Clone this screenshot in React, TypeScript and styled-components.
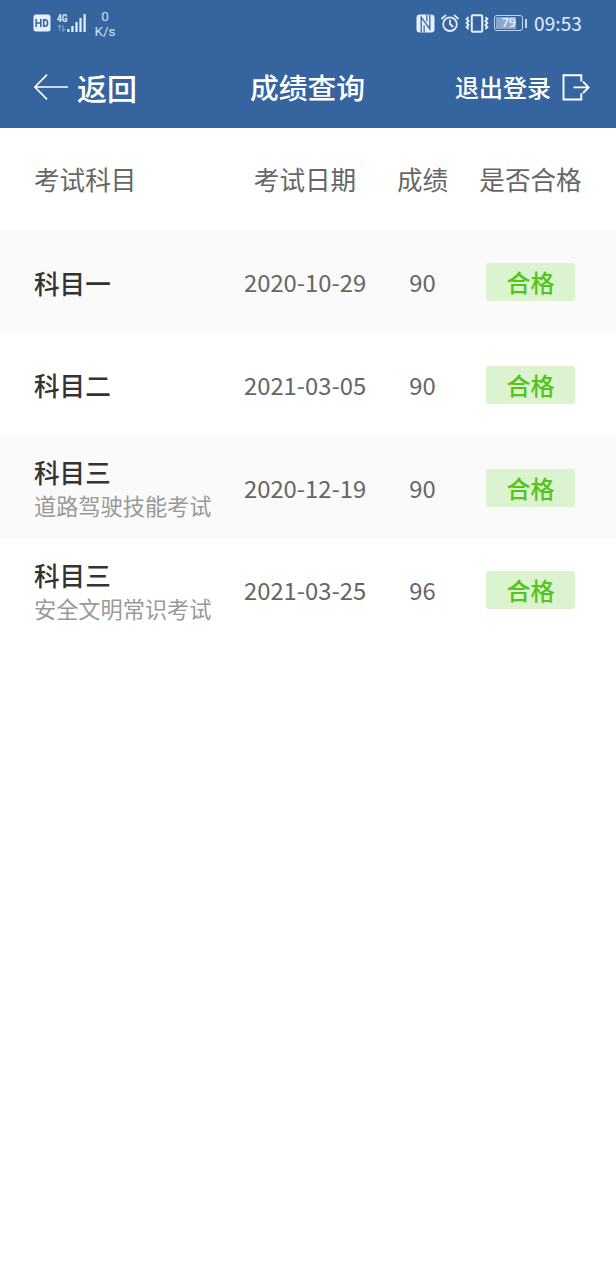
import React from 'react';
import styled, { createGlobalStyle } from 'styled-components';

const cjk = `"Noto Sans CJK SC", sans-serif`;

const GlobalStyle = createGlobalStyle`
  *, *::before, *::after { box-sizing: border-box; }
  body { margin: 0; background: #fff; font-family: "KaiTi", "STKaiti", ${cjk}; }
`;

const Page = styled.main`
  width: 616px;
  min-height: 1280px;
  background: #fff;
`;

const Top = styled.header`
  height: 128px;
  background: #35649f;
  color: #fff;
`;

const StatusBar = styled.div`
  height: 46px;
  padding: 0 34px 0 33px;
  display: flex;
  justify-content: space-between;
  align-items: center;
  color: #e4efff;
`;

const StatusGroup = styled.div<{ $gap: number }>`
  display: flex;
  align-items: center;
  gap: ${({ $gap }) => $gap}px;
  svg { display: block; }
`;

const Speed = styled.div`
  width: 24px;
  padding-top: 2px;
  font: 13.5px/15px Roboto, sans-serif;
  text-align: center;
  white-space: nowrap;
  color: #cfe0f7;
`;

const Clock = styled.time`
  font: 19px/24px "Noto Sans CJK SC", sans-serif;
  letter-spacing: 0.1px;
`;

const Battery = styled.div`
  display: flex;
  align-items: center;
  gap: 2px;
  width: 34px;
  &::after {
    content: '';
    width: 2px;
    height: 9px;
    background: #c2d6f2;
  }
`;

const BatteryLevel = styled.div`
  width: 29px;
  height: 16px;
  padding: 1px;
  border: 1px solid #c2d6f2;
  border-radius: 3px;
  background: linear-gradient(to right, #8ba7cf 79%, transparent 79%) content-box;
  color: #edf5ff;
  font: 500 12.5px/12px "Noto Sans", sans-serif;
  text-align: center;
`;

const NavBar = styled.nav`
  height: 82px;
  padding: 0 26px 0 34px;
  display: grid;
  grid-template-columns: 1fr auto 1fr;
  align-items: center;
`;

const NavButton = styled.button<{ $size: number; $gap: number; $end?: boolean }>`
  display: flex;
  align-items: center;
  justify-self: ${({ $end }) => ($end ? 'end' : 'start')};
  gap: ${({ $gap }) => $gap}px;
  padding: 0;
  border: 0;
  background: none;
  color: inherit;
  font-family: inherit;
  font-weight: 500;
  font-size: ${({ $size }) => $size}px;
  line-height: 36px;
  svg { display: block; }
`;

const Title = styled.h1`
  margin: 0 0 0 -9px;
  font-size: 28.8px;
  line-height: 36px;
  font-weight: 500;
`;

const Table = styled.section`
  display: flex;
  flex-direction: column;
`;

const Row = styled.div<{ $shaded?: boolean }>`
  height: 102.75px;
  padding: 0 34px;
  display: grid;
  grid-template-columns: 210px 122px 113px 103px;
  align-items: center;
  background: ${({ $shaded }) => ($shaded ? '#fafafa' : '#fff')};
`;

const HeadCell = styled.div<{ $left?: boolean }>`
  font-size: 25.6px;
  line-height: 34px;
  color: #666;
  text-align: ${({ $left }) => ($left ? 'left' : 'center')};
  white-space: nowrap;
`;

const Subject = styled.div`
  font-size: 25.6px;
  line-height: 35px;
  font-weight: 500;
  color: #333;
`;

const Detail = styled.div`
  font-size: 22.2px;
  line-height: 32px;
  color: #999;
  white-space: nowrap;
`;

const Value = styled.div`
  font: 23.8px/34px ${cjk};
  color: #666;
  text-align: center;
  white-space: nowrap;
`;

const Badge = styled.span`
  justify-self: center;
  width: 89px;
  height: 38px;
  border-radius: 3px;
  background: #dcf3d0;
  color: #52c41a;
  font-size: 24px;
  line-height: 38px;
  font-weight: 500;
  text-align: center;
`;

const HdIcon = () => (
  <svg width="18" height="18" viewBox="0 0 18 18">
    <rect x="0.5" y="0.5" width="17" height="17" rx="2.5" fill="#e4efff" />
    <path d="M3.2 5v8M7.8 5v8M3.2 9h4.6M10.7 5.7v6.6h1.3c1.8 0 2.6-1.2 2.6-3.3s-.8-3.3-2.6-3.3z" fill="none" stroke="#35649f" strokeWidth="1.6" />
  </svg>
);

const SignalIcon = () => (
  <svg width="30" height="20" viewBox="0 0 30 20" overflow="visible">
    <text x="0" y="8.6" fontFamily="Roboto" fontWeight="700" fontSize="10.5" textLength="10.5" lengthAdjust="spacingAndGlyphs" fill="#e4efff">4G</text>
    <path d="M3 12v6M1 14l2-2M6 12v6l2-2" fill="none" stroke="#7fa2d1" strokeWidth="1.2" />
    <path d="M11.4 16v3M15.4 13v6M19.5 9v10M23.5 5v14M27.6 1v18" stroke="#e4efff" strokeWidth="2.2" />
  </svg>
);

const NfcIcon = () => (
  <svg width="19" height="19" viewBox="0 0 19 19">
    <rect x="0.5" y="0.5" width="18" height="18" rx="3.2" fill="#e4efff" />
    <path d="M5.2 18.5V3.2L13.8 15V.5" fill="none" stroke="#35649f" strokeWidth="1.3" />
    <path d="M8.1 18.5V11.5M10.9.5V7.5" fill="none" stroke="#35649f" strokeWidth="1.2" />
  </svg>
);

const AlarmIcon = () => (
  <svg width="18" height="19" viewBox="0 0 18 19" fill="none" stroke="#e4efff" strokeWidth="1.8" strokeLinecap="round">
    <circle cx="9" cy="10.2" r="6.8" />
    <path d="M9 6.5V10l2.6 2.5M1 4.5 4.5 1.4M17 4.5l-3.5-3.1" />
  </svg>
);

const VibrateIcon = () => (
  <svg width="24" height="19" viewBox="0 0 24 19" fill="none" stroke="#e4efff">
    <rect x="6.8" y="1.3" width="10.4" height="16.4" rx="1" strokeWidth="2" />
    <path d="M3.6 3.2 1.6 5l2 2-2 2 2 2-2 2 2 2M20.4 3.2l2 1.8-2 2 2 2-2 2 2 2-2 2" strokeWidth="1.8" />
  </svg>
);

const BackIcon = () => (
  <svg width="34" height="26" viewBox="0 0 34 26" fill="none" stroke="#fff" strokeWidth="1.7">
    <path d="M13 .7.9 13 13 25.3M1 13h33" />
  </svg>
);

const LogoutIcon = () => (
  <svg width="28" height="27" viewBox="0 0 28 27" fill="none" stroke="#fff" strokeWidth="1.9">
    <path d="M19.3 7.5V1.3H1.5v24.2h17.8v-6.2M11.5 13.4h14.7M21 7.6l5.6 5.8-5.6 5.8" />
  </svg>
);

interface Result {
  subject: string;
  detail?: string;
  date: string;
  score: number;
}

const results: Result[] = [
  { subject: '科目一', date: '2020-10-29', score: 90 },
  { subject: '科目二', date: '2021-03-05', score: 90 },
  { subject: '科目三', detail: '道路驾驶技能考试', date: '2020-12-19', score: 90 },
  { subject: '科目三', detail: '安全文明常识考试', date: '2021-03-25', score: 96 },
];

export default function App() {
  return (
    <Page>
      <GlobalStyle />
      <Top>
        <StatusBar>
          <StatusGroup $gap={6}>
            <HdIcon />
            <SignalIcon />
            <Speed>0<br />K/s</Speed>
          </StatusGroup>
          <StatusGroup $gap={5.75}>
            <NfcIcon />
            <AlarmIcon />
            <VibrateIcon />
            <Battery><BatteryLevel>79</BatteryLevel></Battery>
            <Clock>09:53</Clock>
          </StatusGroup>
        </StatusBar>
        <NavBar>
          <NavButton $size={30} $gap={9}><BackIcon />返回</NavButton>
          <Title>成绩查询</Title>
          <NavButton $size={24} $gap={11} $end>退出登录<LogoutIcon /></NavButton>
        </NavBar>
      </Top>
      <Table>
        <Row>
          <HeadCell $left>考试科目</HeadCell>
          <HeadCell>考试日期</HeadCell>
          <HeadCell>成绩</HeadCell>
          <HeadCell>是否合格</HeadCell>
        </Row>
        {results.map((r, i) => (
          <Row key={`${r.subject}-${r.date}`} $shaded={i % 2 === 0}>
            <div>
              <Subject>{r.subject}</Subject>
              {r.detail && <Detail>{r.detail}</Detail>}
            </div>
            <Value>{r.date}</Value>
            <Value>{r.score}</Value>
            <Badge>合格</Badge>
          </Row>
        ))}
      </Table>
    </Page>
  );
}
